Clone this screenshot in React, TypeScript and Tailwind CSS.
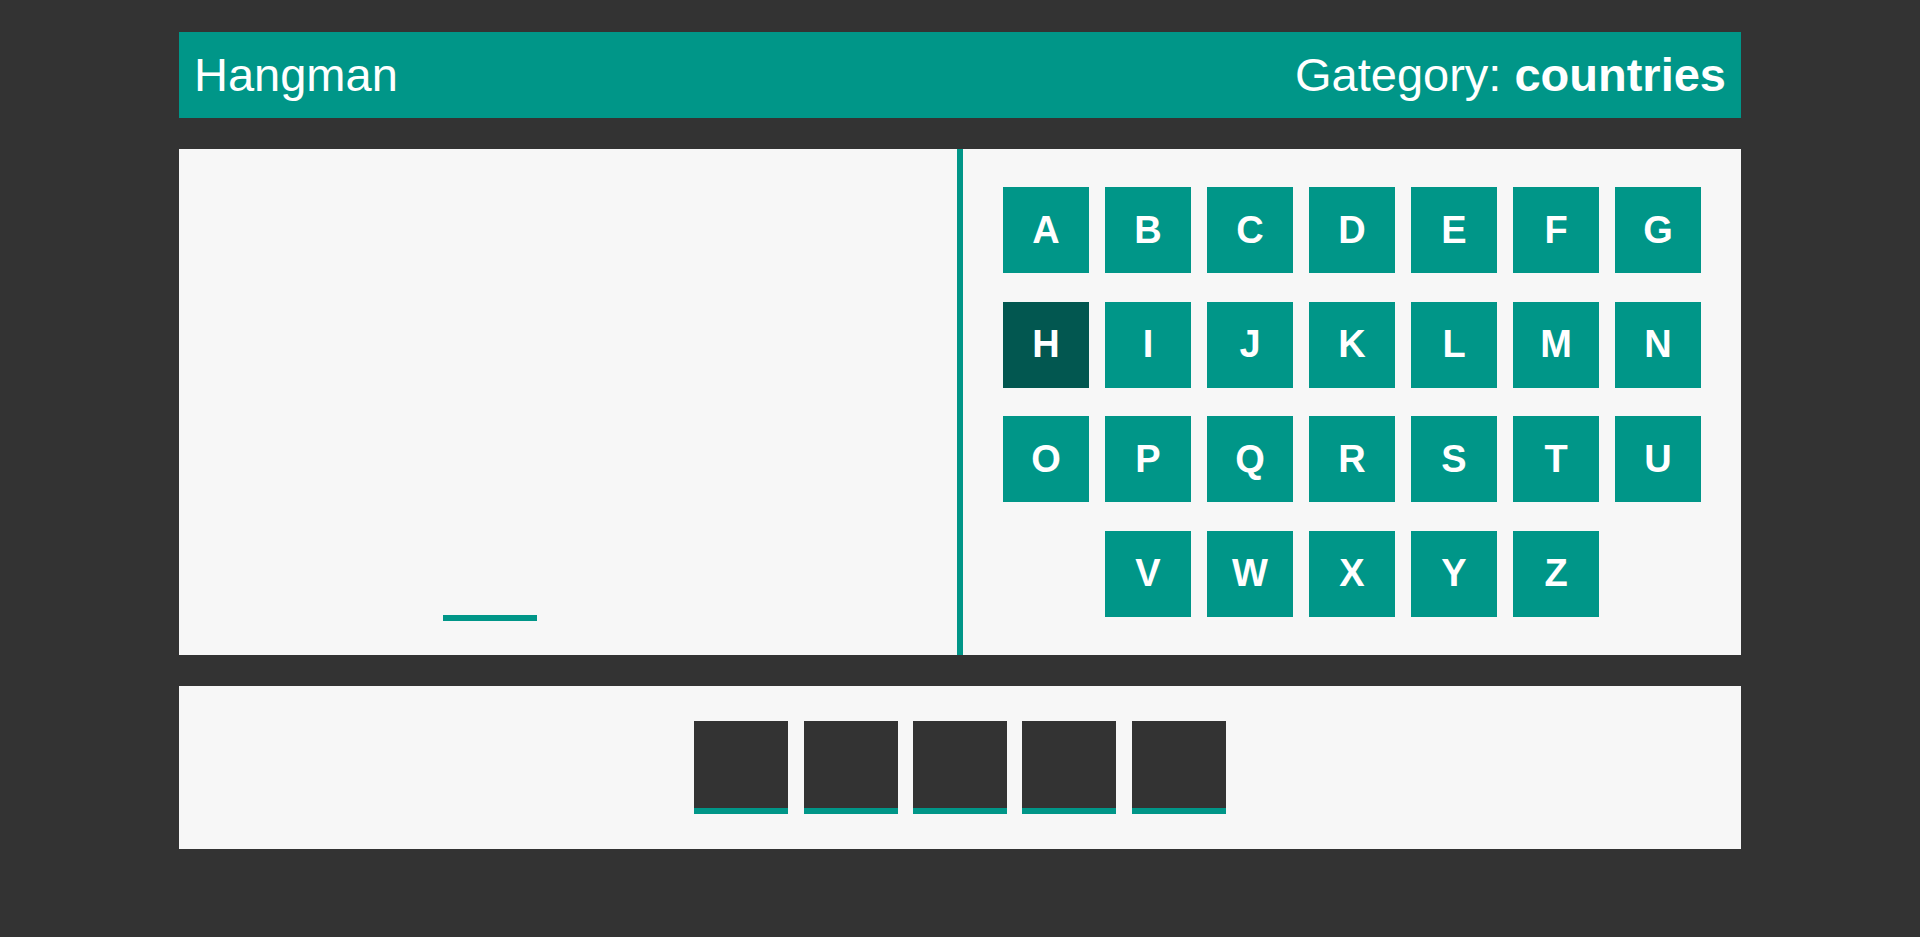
const letterRows = [
  ["A", "B", "C", "D", "E", "F", "G"],
  ["H", "I", "J", "K", "L", "M", "N"],
  ["O", "P", "Q", "R", "S", "T", "U"],
  ["V", "W", "X", "Y", "Z"],
];

const guessed = ["H"];

const LetterButton = ({ letter }: { letter: string }) => {
  const used = guessed.includes(letter);
  return (
    <button
      className={`flex h-[86px] w-[86px] items-center justify-center text-[38px] font-bold text-white ${
        used ? "bg-[#025750]" : "bg-[#009688]"
      }`}
    >
      {letter}
    </button>
  );
};

export default function App() {
  const slots = [0, 1, 2, 3, 4];

  return (
    <div
      className="min-h-screen bg-[#333333] pt-[32px]"
      style={{ fontFamily: '"Liberation Sans", Arial, sans-serif' }}
    >
      <div className="mx-auto flex w-[1562px] flex-col gap-[31px]">
        <header className="flex h-[86px] items-center justify-between bg-[#009688] px-[15px] text-[47px] text-white">
          <span>Hangman</span>
          <span>
            Gategory: <b>countries</b>
          </span>
        </header>

        <section className="flex h-[506px] bg-[#f7f7f7]">
          <div className="flex w-[778px] flex-col justify-end pb-[34px] pl-[264px]">
            <div className="h-[6px] w-[94px] bg-[#009688]" />
          </div>
          <div className="w-[6px] bg-[#009688]" />
          <div className="flex flex-1 flex-col items-center justify-center gap-y-[28.67px]">
            {letterRows.map((row, i) => (
              <div key={i} className="flex gap-x-[16px]">
                {row.map((l) => (
                  <LetterButton key={l} letter={l} />
                ))}
              </div>
            ))}
          </div>
        </section>

        <section className="flex h-[163px] items-center justify-center gap-[15.3px] bg-[#f7f7f7]">
          {slots.map((s) => (
            <div
              key={s}
              className="h-[93px] w-[94px] border-b-[6px] border-[#009688] bg-[#333333]"
            />
          ))}
        </section>
      </div>
    </div>
  );
}
